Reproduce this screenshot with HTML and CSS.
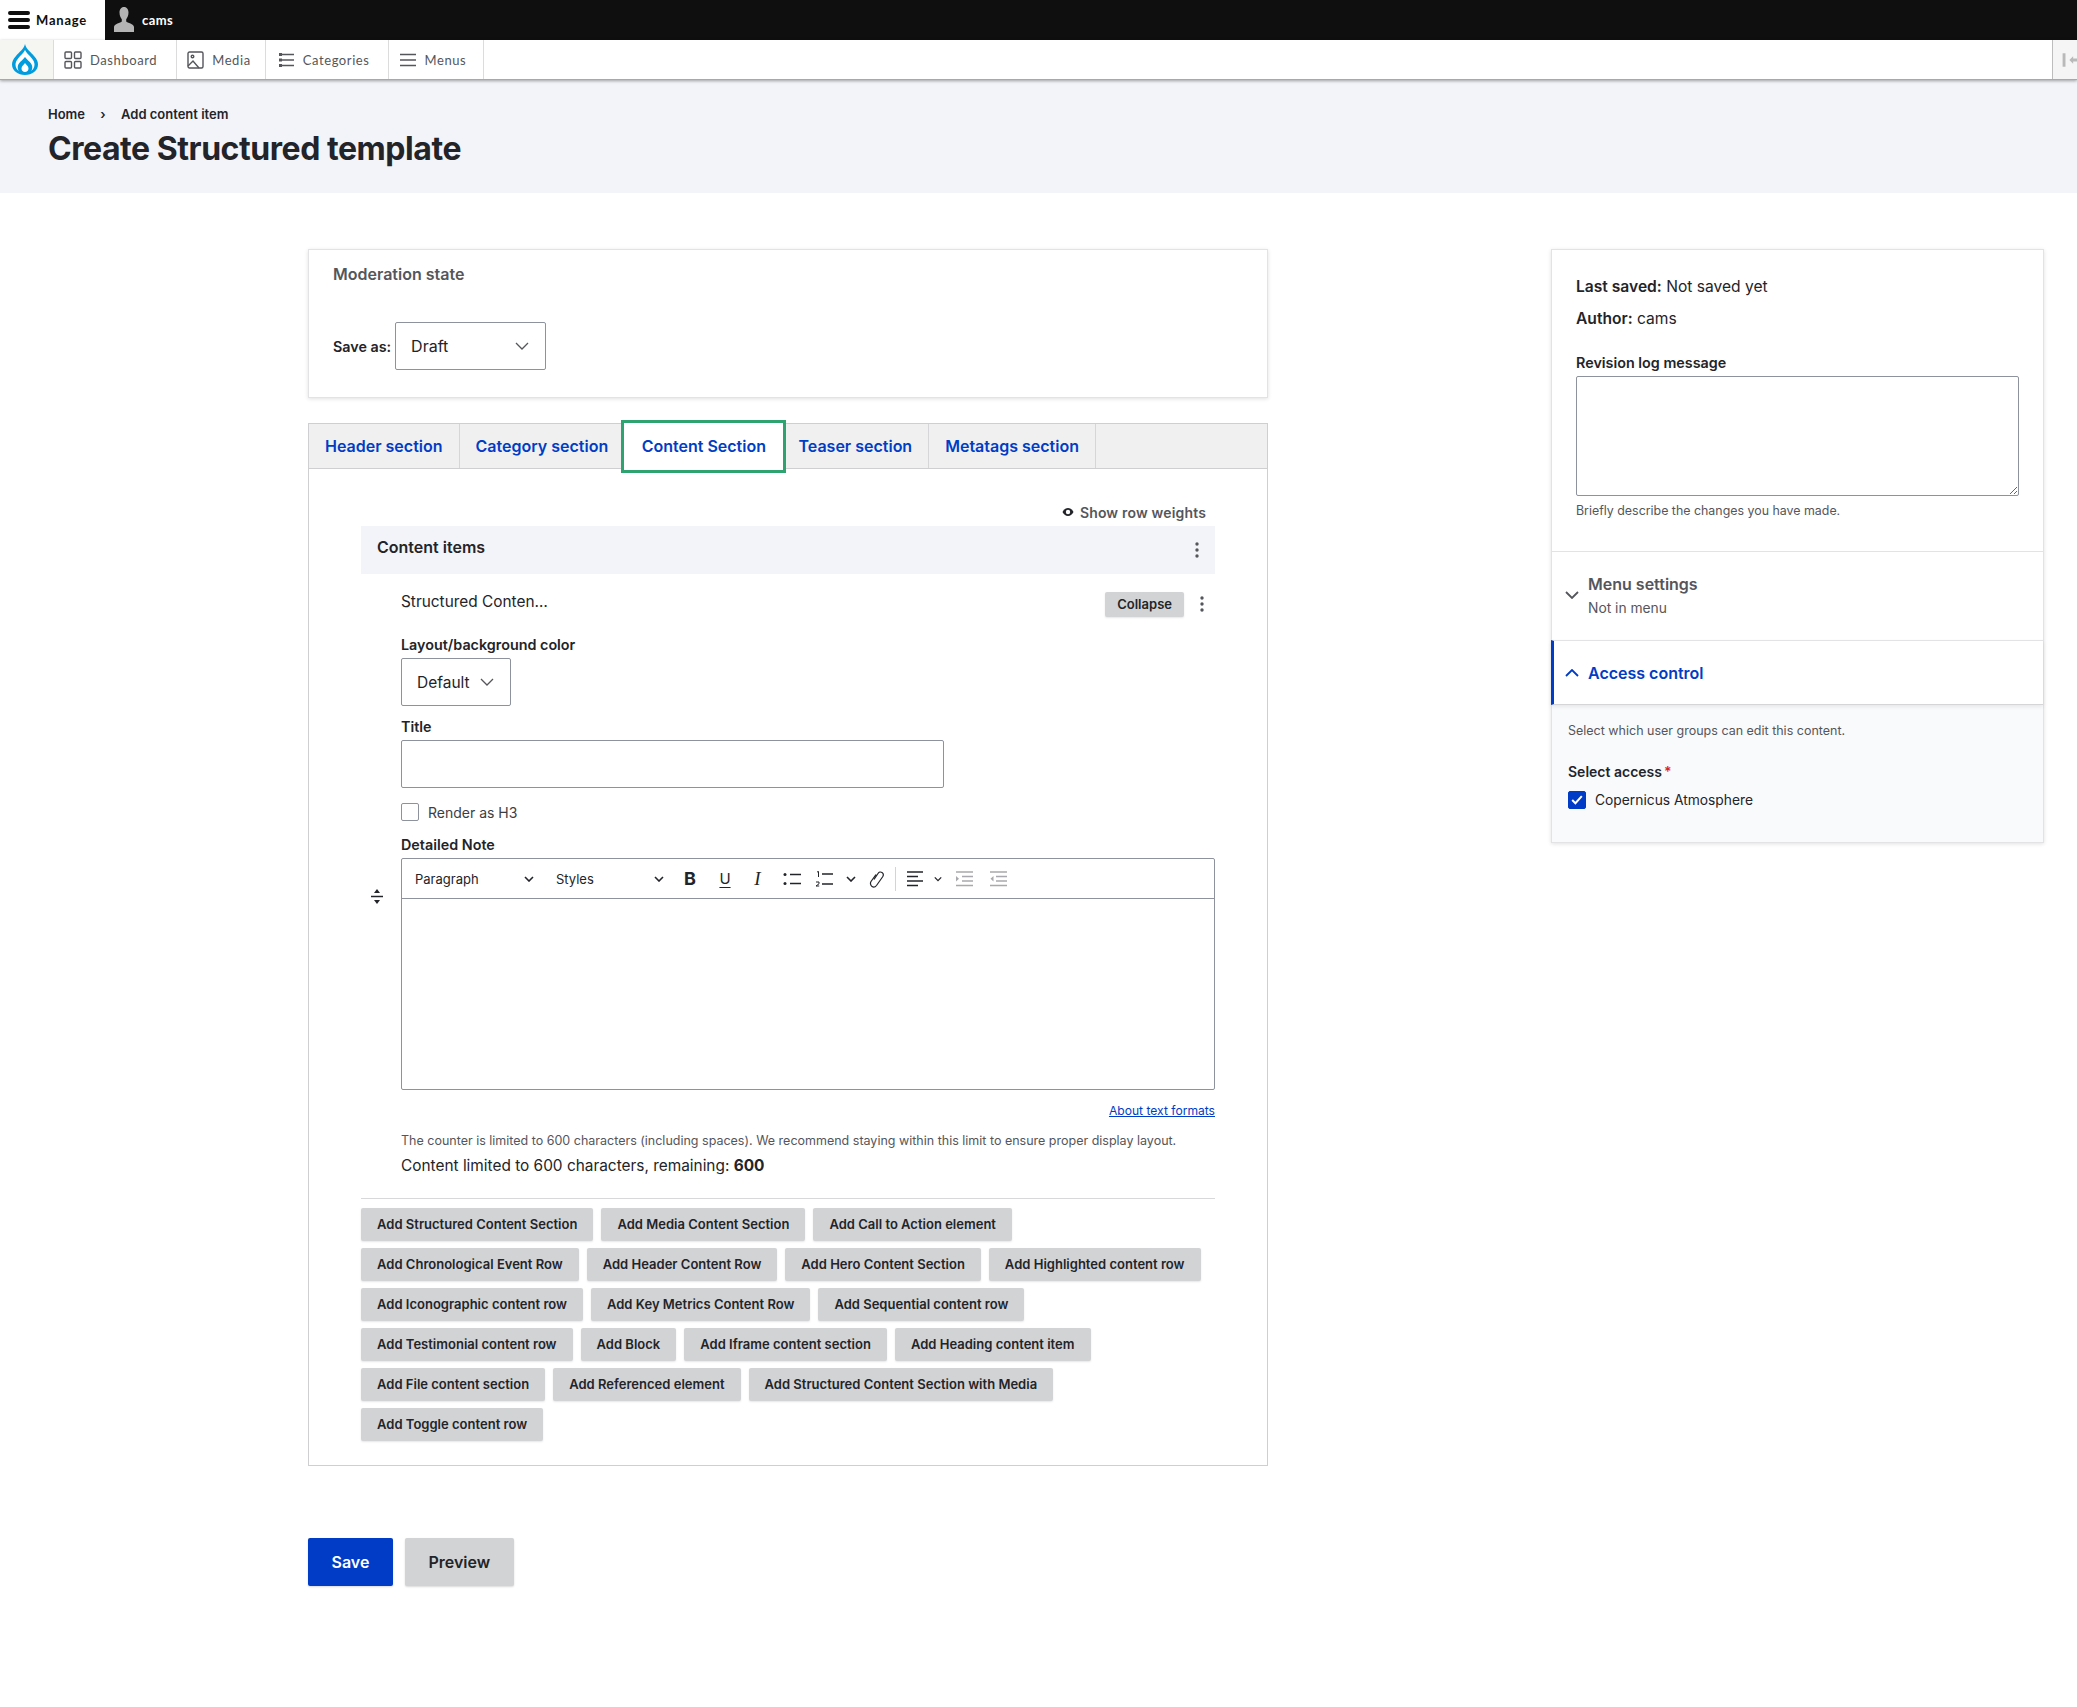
FILE: index.html
```html
<!DOCTYPE html>
<html lang="en">
<head>
<meta charset="utf-8">
<title>Create Structured template</title>
<link rel="stylesheet" href="styles.css">
</head>
<body>
<div class="topbar">
  <a class="manage"><svg width="22" height="20" viewBox="0 0 22 20"><path d="M2 3h18M2 10h18M2 17h18" stroke="#0f0f0f" stroke-width="4" stroke-linecap="round"/></svg><span>Manage</span></a>
  <a class="user"><svg width="20" height="26" viewBox="0 0 20 26"><path d="M10 1c3 0 4.500 2.500 4.500 5.500 0 3-1.200 5.500-2.300 6.800v2.200c1 1.200 7.800 2.300 7.800 5.500V26H0v-5c0-3.200 6.800-4.300 7.800-5.500v-2.200C6.700 12 5.500 9.500 5.500 6.500 5.500 3.500 7 1 10 1z" fill="#b4b4b4"/></svg><span>cams</span></a>
</div>
<nav class="toolbar">
  <a class="logo"><svg width="26" height="31" viewBox="0 0 26 31"><path d="M13 0c1 5 6 8 9 12 3 3 4 6 4 8.500C26 26.500 20 31 13 31S0 26.500 0 20.500C0 18 1 15 4 12c3-4 8-7 9-12z" fill="#009cde"/><path d="M13 6c1.500 3 4.500 5.500 6.500 8 2 2.300 3 4.300 3 6.500 0 2.700-1.300 5-3.300 6.500.8-1.200 1.100-2.500 1.100-3.800 0-4.200-4.800-6.700-7.300-10.200-2.500 3.500-7.300 6-7.300 10.200 0 1.300.3 2.600 1.100 3.800-2-1.500-3.300-3.800-3.300-6.500 0-2.200 1-4.200 3-6.500 2-2.500 5-5 6.500-8z" fill="#fff"/><path d="M13 19c1 1.800 3.500 3 3.500 5.500 0 2-1.600 3.500-3.500 3.500s-3.500-1.500-3.500-3.500c0-2.500 2.500-3.700 3.500-5.500z" fill="#fff"/></svg></a>
  <a class="nav-item nav-dash"><svg width="18" height="18" viewBox="0 0 18 18" fill="none" stroke="#55565b" stroke-width="1.400"><rect x="1" y="1" width="6.500" height="6.500" rx="1"/><rect x="10.500" y="1" width="6.500" height="6.500" rx="1"/><rect x="1" y="10.500" width="6.500" height="6.500" rx="1"/><rect x="10.500" y="10.500" width="6.500" height="6.500" rx="1"/></svg><span>Dashboard</span></a>
  <a class="nav-item nav-media"><svg width="17" height="18" viewBox="0 0 17 18" fill="none" stroke="#55565b" stroke-width="1.400"><rect x="1" y="1" width="15" height="16" rx="1.500"/><circle cx="5.500" cy="5.500" r="1.300"/><path d="M1 15l5-5 6 7"/></svg><span>Media</span></a>
  <a class="nav-item nav-cat"><svg width="15" height="18" viewBox="0 0 15 18" fill="none" stroke="#55565b" stroke-width="1.500"><path d="M3 3.500h12M3 9h12M3 14.500h12"/><path d="M0 3.500h3M0 9h3M0 14.500h3" stroke-width="3"/></svg><span>Categories</span></a>
  <a class="nav-item nav-menus"><svg width="16" height="18" viewBox="0 0 16 18" fill="none" stroke="#55565b" stroke-width="1.500"><path d="M0 3.500h16M0 9h16M0 14.500h16"/></svg><span>Menus</span></a>
  <a class="collapse-nav"><svg width="25" height="14" viewBox="0 0 25 14"><path d="M11.500 0v14" stroke="#b9b9b9" stroke-width="3"/><path d="M25 5.500h-4V3l-4 4 4 4V8.500h4z" fill="#b9b9b9"/></svg></a>
</nav>
<header class="page-head">
  <div class="crumbs"><span>Home</span><span class="crumb-sep">›</span><span>Add content item</span></div>
  <h1>Create Structured template</h1>
</header>
<main class="layout">
  <div class="form-col">
    <section class="card moderation">
      <h2>Moderation state</h2>
      <div class="save-row">
        <label>Save as:</label>
        <div class="select select-draft"><span>Draft</span><svg class="chev" width="14" height="8" viewBox="0 0 14 8"><path d="M1 1l6 6 6-6" fill="none" stroke="#55565b" stroke-width="1.300"/></svg></div>
      </div>
    </section>
    <section class="tabs">
      <div class="tab-bar">
        <a class="tab">Header section</a>
        <a class="tab">Category section</a>
        <a class="tab tab-active">Content Section</a>
        <a class="tab">Teaser section</a>
        <a class="tab">Metatags section</a>
      </div>
      <div class="tab-panel">
        <div class="weights"><svg width="12" height="10" viewBox="0 0 12 10"><path d="M6 1C3.500 1 1.500 3 .5 5c1 2 3 4 5.500 4s4.500-2 5.500-4c-1-2-3-4-5.500-4z" fill="#232429"/><circle cx="6" cy="5" r="2.200" fill="#fff"/></svg><span>Show row weights</span></div>
        <div class="items-head"><h3>Content items</h3><svg class="kebab" width="4" height="16" viewBox="0 0 4 16"><circle cx="2" cy="2" r="1.700"/><circle cx="2" cy="8" r="1.700"/><circle cx="2" cy="14" r="1.700"/></svg></div>
        <div class="item">
          <div class="handle"><svg width="12" height="15" viewBox="0 0 12 15"><path d="M6 0l3 4H3zM6 15l3-4H3z" fill="#232429"/><path d="M0 7.500h12" stroke="#232429" stroke-width="1.500"/></svg></div>
          <div class="item-body">
            <div class="item-top">
              <span class="item-title">Structured Conten…</span>
              <div class="item-actions"><button class="btn-small">Collapse</button><svg class="kebab" width="4" height="16" viewBox="0 0 4 16"><circle cx="2" cy="2" r="1.700"/><circle cx="2" cy="8" r="1.700"/><circle cx="2" cy="14" r="1.700"/></svg></div>
            </div>
            <label class="field-label label-layout">Layout/background color</label>
            <div class="select select-default"><span>Default</span><svg class="chev" width="14" height="8" viewBox="0 0 14 8"><path d="M1 1l6 6 6-6" fill="none" stroke="#55565b" stroke-width="1.300"/></svg></div>
            <label class="field-label label-title">Title</label>
            <input class="text-input" type="text">
            <div class="check-row"><span class="check"></span><span>Render as H3</span></div>
            <label class="field-label label-note">Detailed Note</label>
            <div class="editor">
              <div class="editor-bar">
                <div class="tb-drop tb-para"><span>Paragraph</span><svg width="10" height="6" viewBox="0 0 10 6"><path d="M1 1l4 4 4-4" fill="none" stroke="#232429" stroke-width="1.600"/></svg></div>
                <div class="tb-drop tb-styles"><span>Styles</span><svg width="10" height="6" viewBox="0 0 10 6"><path d="M1 1l4 4 4-4" fill="none" stroke="#232429" stroke-width="1.600"/></svg></div>
                <span class="tb tb-w36 glyph-b">B</span>
                <span class="tb tb-w34 glyph-u">U</span>
                <span class="tb tb-w31 glyph-i">I</span>
                <span class="tb tb-w36 tb-list"><svg width="18" height="14" viewBox="0 0 18 14" fill="none" stroke="#232429"><circle cx="2" cy="2.500" r="1.500" fill="#232429" stroke="none"/><circle cx="2" cy="11.500" r="1.500" fill="#232429" stroke="none"/><path d="M7 2.500h11M7 11.500h11" stroke-width="1.500"/></svg></span>
                <span class="tb tb-w29"><svg width="18" height="16" viewBox="0 0 18 16" fill="none" stroke="#232429"><path d="M2 1l1.500-.5V6" stroke-width="1"/><path d="M1 11h3v1.800L1 15h3.200" stroke-width="1"/><path d="M7 3h11M7 13h11" stroke-width="1.500"/></svg></span>
                <span class="tb tb-w26"><svg width="10" height="6" viewBox="0 0 10 6"><path d="M1 1l4 4 4-4" fill="none" stroke="#232429" stroke-width="1.600"/></svg></span>
                <span class="tb tb-w26"><svg width="16" height="18" viewBox="0 0 16 18" fill="none" stroke="#232429" stroke-width="1.200"><path d="M5 9.500l4-6c1-1.500 2.500-2 4-1s1.500 3 .5 4.500l-6 8.500c-1.200 1.500-3 2-4.500 1S1 13 2 11.500l5-7"/></svg></span>
                <span class="tb-sep"></span>
                <span class="tb tb-w36"><svg width="16" height="16" viewBox="0 0 16 16" fill="none" stroke="#232429" stroke-width="1.500"><path d="M0 1h16M0 5.500h11M0 10h16M0 14.500h11"/></svg></span>
                <span class="tb tb-w8"><svg width="10" height="6" viewBox="0 0 10 6"><path d="M1 1l4 4 4-4" fill="none" stroke="#232429" stroke-width="1.600"/></svg></span>
                <span class="tb tb-w38"><svg width="17" height="16" viewBox="0 0 17 16" fill="none" stroke="#a9a9ad" stroke-width="1.500"><path d="M0 1h17M6 5.500h11M6 10h11M0 14.500h17"/><path d="M0 5l3 2.700-3 2.700z" fill="#a9a9ad" stroke="none"/></svg></span>
                <span class="tb tb-w30"><svg width="17" height="16" viewBox="0 0 17 16" fill="none" stroke="#a9a9ad" stroke-width="1.500"><path d="M0 1h17M6 5.500h11M6 10h11M0 14.500h17"/><path d="M3.500 5L.5 7.700l3 2.700z" fill="#a9a9ad" stroke="none"/></svg></span>
              </div>
              <div class="editor-area"></div>
            </div>
            <div class="formats"><a>About text formats</a></div>
            <p class="help">The counter is limited to 600 characters (including spaces). We recommend staying within this limit to ensure proper display layout.</p>
            <p class="counter">Content limited to 600 characters, remaining: <strong>600</strong></p>
          </div>
        </div>
        <hr class="rule">
        <div class="add-buttons">
          <button class="btn-small">Add Structured Content Section</button>
          <button class="btn-small">Add Media Content Section</button>
          <button class="btn-small">Add Call to Action element</button>
          <button class="btn-small">Add Chronological Event Row</button>
          <button class="btn-small">Add Header Content Row</button>
          <button class="btn-small">Add Hero Content Section</button>
          <button class="btn-small">Add Highlighted content row</button>
          <button class="btn-small">Add Iconographic content row</button>
          <button class="btn-small">Add Key Metrics Content Row</button>
          <button class="btn-small">Add Sequential content row</button>
          <button class="btn-small">Add Testimonial content row</button>
          <button class="btn-small">Add Block</button>
          <button class="btn-small">Add Iframe content section</button>
          <button class="btn-small">Add Heading content item</button>
          <button class="btn-small">Add File content section</button>
          <button class="btn-small">Add Referenced element</button>
          <button class="btn-small">Add Structured Content Section with Media</button>
          <button class="btn-small">Add Toggle content row</button>
        </div>
      </div>
    </section>
    <div class="actions">
      <button class="btn btn-primary">Save</button>
      <button class="btn btn-grey">Preview</button>
    </div>
  </div>
  <aside class="card side">
    <div class="side-top">
      <p class="meta"><strong>Last saved:</strong> Not saved yet</p>
      <p class="meta meta-author"><strong>Author:</strong> cams</p>
      <label class="field-label label-rev">Revision log message</label>
      <textarea class="revision"></textarea>
      <p class="side-help">Briefly describe the changes you have made.</p>
    </div>
    <div class="acc acc-menu">
      <svg class="acc-chev" width="14" height="8" viewBox="0 0 14 8"><path d="M1 1l6 6 6-6" fill="none" stroke="#55565b" stroke-width="1.800"/></svg>
      <div><div class="acc-title">Menu settings</div><div class="acc-sub">Not in menu</div></div>
    </div>
    <div class="acc acc-open">
      <svg class="acc-chev" width="14" height="8" viewBox="0 0 14 8"><path d="M1 7l6-6 6 6" fill="none" stroke="#003cc5" stroke-width="1.800"/></svg>
      <div class="acc-title">Access control</div>
    </div>
    <div class="acc-body">
      <p class="side-help">Select which user groups can edit this content.</p>
      <div class="field-label label-access">Select access<span class="req">*</span></div>
      <div class="access-row"><span class="check check-on"><svg width="12" height="10" viewBox="0 0 12 10"><path d="M1.200 5l3.200 3.200 6.400-7" fill="none" stroke="#fff" stroke-width="2"/></svg></span><span>Copernicus Atmosphere</span></div>
    </div>
  </aside>
</main>
</body>
</html>
```
FILE: styles.css
```css
* { box-sizing: border-box; }
html, body { margin: 0; padding: 0; }
body {
  background: #fff;
  color: #232429;
  font-family: Inter, "Liberation Sans", sans-serif;
  font-size: 14px;
  min-height: 1707px;
}
p, h1, h2, h3 { margin: 0; }
button { font-family: inherit; border: 0; }

/* Top bars */
.topbar { display: flex; height: 40px; background: #0f0f0f; font-family: Lato, sans-serif; font-size: 13px; font-weight: 700; letter-spacing: .03em; }
.manage { display: flex; align-items: center; gap: 6px; width: 105px; padding-left: 8px; background: #fff; color: #0f0f0f; letter-spacing: .06em; }
.user { display: flex; align-items: center; gap: 8px; padding-left: 9px; color: #fff; }
.user svg { margin-top: -2px; }
.toolbar { position: relative; display: flex; height: 40px; background: #fff; border-bottom: 1px solid #a8a8a8; box-shadow: 0 1px 3px rgba(0,0,0,.35); font-family: Lato, sans-serif; font-size: 13px; letter-spacing: .045em; color: #55565b; }
.logo { display: flex; align-items: center; justify-content: center; width: 54px; padding-right: 3px; background: #f5f5f2; border-right: 1px solid #dcdcdc; }
.nav-item { display: flex; align-items: center; gap: 8px; padding: 0 18px 0 11px; border-right: 1px solid #dcdcdc; }
.nav-dash { padding: 0 19px 0 10px; }
.nav-media { padding: 0 14px 0 10px; }
.nav-cat { gap: 9px; padding: 0 18px 0 13px; }
.nav-menus { gap: 9px; padding: 0 17px 0 11px; }
.collapse-nav { display: flex; align-items: center; width: 25px; margin-left: auto; background: #f5f5f5; border-left: 1px solid #bdbdbd; overflow: hidden; }

/* Page header */
.page-head { height: 113px; padding: 26px 48px 0; background: #f3f4f9; }
.crumbs { display: flex; font-size: 13px; font-weight: 600; line-height: 16px; color: #232429; }
.crumb-sep { width: 36px; text-align: center; }
h1 { margin-top: 7px; font-size: 32px; font-weight: 700; line-height: 40px; letter-spacing: -.014em; }

/* Layout */
.layout { display: grid; grid-template-columns: 960px 493px; column-gap: 283px; padding: 56px 0 121px 308px; align-items: start; }
.card { background: #fff; border: 1px solid #e3e3e6; box-shadow: 0 1px 4px rgba(0,0,0,.12); }

/* Moderation */
.moderation { height: 149px; padding: 13px 24px 0; }
.moderation h2 { font-size: 16px; font-weight: 600; line-height: 22px; color: #55565b; }
.save-row { display: flex; align-items: center; gap: 4px; margin-top: 37px; font-size: 14.300px; font-weight: 600; }
.select { display: flex; align-items: center; justify-content: space-between; height: 48px; background: #fff; border: 1px solid #8e929c; border-radius: 2px; font-size: 16px; }
.select-draft { width: 151px; padding: 0 16px 0 15px; font-weight: 400; }
.select-default { width: 110px; padding: 0 16px 0 15px; font-size: 15.500px; }

/* Tabs */
.tabs { margin-top: 25px; border: 1px solid #cfcfd2; }
.tab-bar { display: flex; height: 45px; background: #f0f0f0; border-bottom: 1px solid #cfcfd2; }
.tab { display: flex; align-items: center; padding: 0 16px; border-right: 1px solid #d6d6d8; color: #003cc5; font-size: 16px; font-weight: 600; white-space: nowrap; }
.tab-active { position: relative; height: 53px; margin: -4px 0 0 -4px; padding: 0 17.500px 1px; background: #fff; border: 3px solid #2fa36f; }
.tab-active + .tab { padding-left: 12px; }
.tab-panel { padding: 35px 52px 24px; }
.weights { display: flex; align-items: center; justify-content: flex-end; gap: 6px; height: 16px; margin-right: 9px; font-size: 14px; font-weight: 600; letter-spacing: .012em; color: #55565b; }
.items-head { display: flex; align-items: center; justify-content: space-between; height: 48px; margin-top: 6px; padding: 0 16px 6px; background: #f3f4f9; }
.items-head h3 { font-size: 16px; font-weight: 600; }
.kebab { fill: #55565b; }
.items-head .kebab { margin-top: 5px; }

/* Item */
.item { display: flex; }
.handle { display: flex; align-items: center; justify-content: center; flex: 0 0 40px; padding-right: 8px; margin-top: 42px; }
.item-body { flex: 1; min-width: 0; padding-top: 18px; }
.item-top { display: flex; justify-content: space-between; height: 25px; }
.item-title { font-size: 15.400px; line-height: 20px; }
.item-actions { display: flex; align-items: center; gap: 16px; margin-right: 11px; }
.item-actions .kebab { margin-top: -2px; }
.field-label { display: block; font-size: 14.350px; font-weight: 600; line-height: 18px; }
.label-layout { margin: 19px 0 4px; }
.label-title { margin: 12px 0 4px; }
.label-note { margin: 15px 0 4px; }
.text-input { display: block; width: 543px; height: 48px; border: 1px solid #8e929c; border-radius: 2px; background: #fff; }
.check-row { display: flex; align-items: center; gap: 9px; margin-top: 15px; font-size: 14px; color: #3d3e43; }
.check { display: block; width: 18px; height: 18px; border: 1px solid #8e929c; border-radius: 2px; background: #fff; }

/* Editor */
.editor { border: 1px solid #8e929c; border-radius: 2px; }
.editor-bar { display: flex; align-items: center; height: 40px; border-bottom: 1px solid #8e929c; }
.editor-area { height: 190px; }
.tb-drop { display: flex; align-items: center; justify-content: space-between; font-size: 13px; }
.tb-para { width: 140px; padding: 0 8px 0 13px; }
.tb-styles { width: 130px; padding: 0 8px 0 14px; }
.tb { display: flex; align-items: center; justify-content: center; height: 20px; }
.tb-w36 { width: 36px; }
.tb-w34 { width: 34px; }
.tb-w31 { width: 31px; }
.tb-w29 { width: 29px; }
.tb-w26 { width: 26px; }
.tb-w8 { width: 8px; margin-left: 1px; }
.tb-w38 { width: 38px; margin-left: 3px; }
.tb-w30 { width: 30px; }
.tb-list { padding-left: 2px; }
.tb-sep { width: 1px; height: 24px; margin: 0 1px 0 5px; background: #d4d4d8; }
.glyph-b { font-size: 18px; font-weight: 700; }
.glyph-u { font-size: 15px; text-decoration: underline; text-underline-offset: 3px; }
.glyph-i { font-family: "Liberation Serif", serif; font-size: 19px; font-style: italic; }
.formats { margin-top: 13px; text-align: right; font-size: 12.100px; line-height: 16px; }
.formats a { color: #003cc5; text-decoration: underline; }
.help { margin-top: 14px; font-size: 12.500px; line-height: 16px; color: #55565b; }
.counter { margin-top: 7px; font-size: 15.400px; line-height: 20px; }
.counter strong { font-weight: 700; }
.rule { height: 1px; margin: 22px 0 9px; border: 0; background: #d8d8db; }

/* Buttons */
.add-buttons { display: flex; flex-wrap: wrap; gap: 7px 8px; }
.btn-small { height: 33px; padding: 0 16px 2px; background: #d2d3d5; border-radius: 2px; color: #232429; font-size: 13px; font-weight: 600; letter-spacing: .001em; box-shadow: 0 1px 2px rgba(0,0,0,.1); white-space: nowrap; }
.item-actions .btn-small { height: 25px; padding: 0 12px 2px; }
.actions { display: flex; gap: 12px; margin-top: 72px; }
.btn { height: 48px; padding: 0 23.500px; border-radius: 2px; font-size: 16px; font-weight: 600; box-shadow: 0 1px 2px rgba(0,0,0,.15); }
.btn-primary { background: #003cc5; color: #fff; }
.btn-grey { background: #d2d3d5; color: #232429; }

/* Sidebar */
.side { height: 594px; }
.side-top { height: 302px; padding: 27px 24px 0; border-bottom: 1px solid #e3e3e6; }
.meta { font-size: 15.600px; line-height: 20px; }
.meta strong { font-weight: 600; }
.meta-author { margin-top: 12px; }
.label-rev { margin: 25px 0 4px; }
.revision { display: block; width: 443px; height: 120px; border: 1px solid #8e929c; border-radius: 2px; background: #fff; }
.side-help { margin-top: 7px; font-size: 12.400px; line-height: 16px; color: #55565b; }
.acc { display: flex; align-items: center; gap: 9px; padding-left: 13px; }
.acc-chev { flex: none; }
.acc-menu { height: 88px; padding-bottom: 2px; }
.acc-title { font-size: 16px; font-weight: 600; line-height: 22px; color: #55565b; }
.acc-sub { margin-top: 4px; font-size: 13.800px; line-height: 18px; color: #55565b; }
.acc-open { position: relative; height: 65px; margin-left: -1px; padding-left: 11px; border-top: 1px solid #e3e3e6; border-bottom: 1px solid #d5d5d8; border-left: 3px solid #003cc5; box-shadow: 0 2px 4px rgba(0,0,0,.08); }
.acc-open .acc-title { color: #003cc5; }
.acc-body { height: 137px; padding: 10px 16px 0; background: #f9fafc; }
.acc-body .side-help { margin-top: 8px; font-size: 12.500px; }
.label-access { margin-top: 24px; font-size: 14px; }
.req { margin-left: 2px; color: #dc2323; }
.access-row { display: flex; align-items: center; gap: 9px; margin-top: 10px; font-size: 13.800px; }
.check-on { display: flex; align-items: center; justify-content: center; background: #003cc5; border-color: #003cc5; }
```
